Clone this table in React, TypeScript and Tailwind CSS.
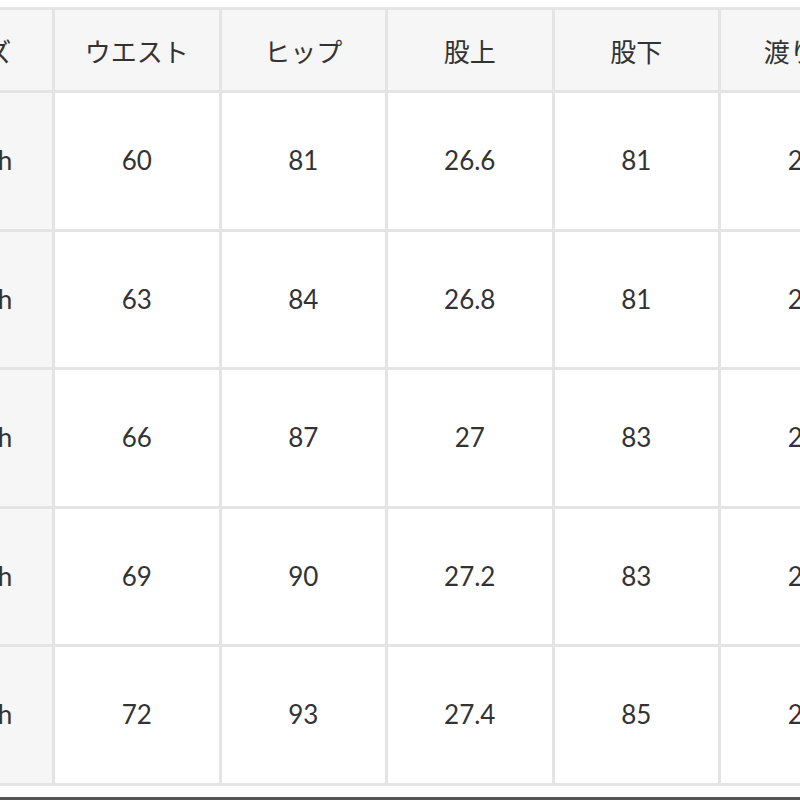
import React from 'react';

const headers = ['サイズ', 'ウエスト', 'ヒップ', '股上', '股下', '渡り幅', '裾幅'];

const rows = [
  { size: '23inch', values: ['60', '81', '26.6', '81', '25', '17'] },
  { size: '24inch', values: ['63', '84', '26.8', '81', '26', '17.5'] },
  { size: '25inch', values: ['66', '87', '27', '83', '27', '18'] },
  { size: '26inch', values: ['69', '90', '27.2', '83', '28', '18.5'] },
  { size: '27inch', values: ['72', '93', '27.4', '85', '29', '19'] },
];

export default function App() {
  return (
    <div className="w-[800px] h-[800px] bg-white overflow-hidden flex flex-col text-[#333333] font-['Lato','Noto_Sans_CJK_JP',sans-serif]">
      <div className="flex-1 pt-[7px]">
        {/* Size table */}
        <div className="ml-[-114.5px] w-max grid grid-cols-[repeat(7,163.5px)] gap-[3px] p-[3px] bg-[#e4e4e4]">
          {headers.map((h, i) => (
            <div
              key={h}
              className={`h-[80px] bg-[#f6f6f6] flex items-center justify-center text-[26px] font-['Noto_Sans_CJK_JP',sans-serif] ${i === 0 ? 'pl-[5px]' : ''}`}
            >
              {h}
            </div>
          ))}
          {rows.map((row) => (
            <React.Fragment key={row.size}>
              <div className="h-[135.5px] bg-[#f6f6f6] flex items-center justify-center pl-[6px] text-[26px]">
                {row.size}
              </div>
              {row.values.map((v, i) => (
                <div
                  key={i}
                  className="h-[135.5px] bg-white flex items-center justify-center text-[26px]"
                >
                  {v}
                </div>
              ))}
            </React.Fragment>
          ))}
        </div>
      </div>
      <div className="h-[3px] bg-[#555555]" />
    </div>
  );
}
